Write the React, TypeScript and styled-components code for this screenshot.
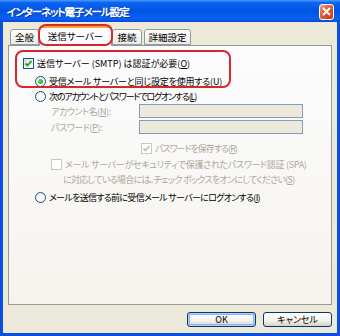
import styled, { createGlobalStyle } from "styled-components";

const GlobalStyle = createGlobalStyle`
  html, body {
    margin: 0;
    padding: 0;
    background: #ffffff;
  }
  body {
    font-family: "Noto Sans CJK JP", "Liberation Sans", sans-serif;
    font-feature-settings: "palt";
  }
`;

const Window = styled.div`
  position: relative;
  width: 340px;
  height: 336px;
  display: flex;
  flex-direction: column;
  background: #0a4fe0;
  overflow: hidden;
`;

const TitleBar = styled.div`
  height: 22px;
  flex: none;
  display: flex;
  align-items: center;
  justify-content: space-between;
  padding: 0 6px 0 7px;
  background: linear-gradient(
    to bottom,
    #4a9cff 0%,
    #0c63f2 12%,
    #0054e3 50%,
    #0860f2 85%,
    #0848d8 100%
  );
`;

const Title = styled.span`
  color: #ffffff;
  font-size: 10.5px;
  font-weight: 400;
  letter-spacing: -1px;
  -webkit-text-stroke: 0.45px #ffffff;
  text-shadow: 1px 1px 0 #0a2a8a;
`;

const CloseButton = styled.span`
  width: 15px;
  height: 16px;
  box-sizing: border-box;
  border: 1px solid #ffffff;
  border-radius: 3px;
  background: linear-gradient(135deg, #f0a08a 0%, #e2603c 40%, #c7380f 100%);
  display: flex;
  align-items: center;
  justify-content: center;
  margin-top: 1px;
`;

const Frame = styled.div`
  flex: 1;
  margin: 0 3px 3px;
  background: #ece9d8;
  display: flex;
  flex-direction: column;
`;

const TabStrip = styled.div`
  height: 23px;
  display: flex;
  align-items: flex-end;
  padding-left: 7px;
  position: relative;
  z-index: 1;
`;

const Tab = styled.div<{ $active?: boolean; $w: number; $gap?: number }>`
  box-sizing: border-box;
  width: ${({ $w }) => $w}px;
  margin-left: ${({ $gap }) => $gap ?? 0}px;
  height: ${({ $active }) => ($active ? 20 : 16)}px;
  margin-bottom: ${({ $active }) => ($active ? -1 : 0)}px;
  display: flex;
  align-items: center;
  justify-content: center;
  font-size: 9.5px;
  color: #000000;
  border: 1px solid #919b9c;
  border-bottom: ${({ $active }) => ($active ? "none" : "1px solid #919b9c")};
  border-top: ${({ $active }) =>
    $active ? "2px solid #f5a831" : "1px solid #919b9c"};
  border-radius: 3px 3px 0 0;
  background: ${({ $active }) =>
    $active ? "#fcfcfe" : "linear-gradient(to bottom, #ffffff, #ecebe5)"};
  padding-bottom: ${({ $active }) => ($active ? 2 : 0)}px;
`;

const Panel = styled.div`
  box-sizing: border-box;
  height: 260px;
  margin: 0 5px 0 5px;
  border: 1px solid #919b9c;
  background: linear-gradient(to bottom, #fcfcfe 0%, #f7f6f2 70%, #f4f3ee 100%);
  padding-top: 10px;
  display: flex;
  flex-direction: column;
`;

const Row = styled.div<{ $indent: number; $top?: number; $ls?: number }>`
  display: flex;
  align-items: center;
  height: 15px;
  padding-left: ${({ $indent }) => $indent}px;
  margin-top: ${({ $top }) => $top ?? 0}px;
  font-size: 9px;
  letter-spacing: ${({ $ls }) => $ls ?? 0}px;
  white-space: nowrap;
`;

const Label = styled.span<{ $disabled?: boolean }>`
  color: ${({ $disabled }) => ($disabled ? "#aca899" : "#000000")};
  margin-left: 3px;
`;

const FieldRow = styled.div<{ $top?: number }>`
  display: flex;
  align-items: center;
  height: 14px;
  padding-left: 42px;
  margin-top: ${({ $top }) => $top ?? 0}px;
  font-size: 9px;
  letter-spacing: -0.4px;
`;

const FieldLabel = styled.span`
  width: 88px;
  color: #aca899;
`;

const Field = styled.div`
  box-sizing: border-box;
  width: 164px;
  height: 14px;
  border: 1px solid #7f9db9;
  background: #ede9da;
`;

const SpaBlock = styled.div`
  display: flex;
  align-items: flex-start;
  padding-left: 42px;
  margin-top: 1px;
  font-size: 9px;
  line-height: 15px;
  color: #aca899;
  white-space: nowrap;
  letter-spacing: -0.3px;
`;

const SpaBox = styled.div`
  height: 15px;
  display: flex;
  align-items: center;
`;

const SpaText = styled.div`
  margin-left: 3px;
`;

const SpaSecond = styled.span`
  margin-left: -2px;
  letter-spacing: -0.7px;
`;

const BoxMark = styled.span<{ $disabled?: boolean }>`
  box-sizing: border-box;
  flex: none;
  width: 11px;
  height: 11px;
  border: 1px solid ${({ $disabled }) => ($disabled ? "#cac8bb" : "#1c5180")};
  background: ${({ $disabled }) =>
    $disabled ? "#ffffff" : "linear-gradient(135deg, #dcdcd7, #ffffff)"};
  display: flex;
  align-items: center;
  justify-content: center;
`;

const RadioMark = styled.span<{ $on?: boolean }>`
  box-sizing: border-box;
  flex: none;
  width: 11px;
  height: 11px;
  border-radius: 50%;
  border: 1px solid #1c5180;
  background: radial-gradient(circle at 60% 60%, #ffffff 30%, #e2e2dc 100%);
  display: flex;
  align-items: center;
  justify-content: center;
  &::after {
    content: "";
    display: ${({ $on }) => ($on ? "block" : "none")};
    width: 5px;
    height: 5px;
    border-radius: 50%;
    background: radial-gradient(circle at 35% 35%, #5cd65c, #21a121);
  }
`;

const ButtonRow = styled.div`
  display: flex;
  justify-content: flex-end;
  gap: 7px;
  margin-top: 7px;
  padding-right: 5px;
`;

const Button = styled.div<{ $default?: boolean }>`
  box-sizing: border-box;
  width: 69px;
  height: 15px;
  border: 1px solid #003c74;
  border-radius: 3px;
  background: linear-gradient(to bottom, #ffffff 0%, #f3f2ee 60%, #d6d0c5 100%);
  box-shadow: ${({ $default }) =>
    $default ? "inset 0 0 0 1px #b6cef5, inset 0 0 0 2px #8fb1ea" : "none"};
  display: flex;
  align-items: center;
  justify-content: center;
  font-size: 9px;
  color: #000000;
`;

const Mark = styled.div<{ $x: number; $y: number; $w: number; $h: number }>`
  position: absolute;
  left: ${({ $x }) => $x}px;
  top: ${({ $y }) => $y}px;
  width: ${({ $w }) => $w}px;
  height: ${({ $h }) => $h}px;
  box-sizing: border-box;
  border: 2px solid #d7262c;
  border-radius: 8px;
  z-index: 5;
  pointer-events: none;
`;

const Check = ({ color }: { color: string }) => (
  <svg width="9" height="9" viewBox="0 0 9 9">
    <path
      d="M1.5 4.5 L3.5 6.5 L7.5 2"
      fill="none"
      stroke={color}
      strokeWidth="1.8"
    />
  </svg>
);

const CloseIcon = () => (
  <svg width="9" height="9" viewBox="0 0 9 9">
    <path d="M1 1 L8 8 M8 1 L1 8" stroke="#ffffff" strokeWidth="1.8" />
  </svg>
);

export default function App() {
  return (
    <>
      <GlobalStyle />
      <Window>
        <TitleBar>
          <Title>インターネット電子メール設定</Title>
          <CloseButton>
            <CloseIcon />
          </CloseButton>
        </TitleBar>
        <Frame>
          <TabStrip>
            <Tab $w={29} $gap={0}>全般</Tab>
            <Tab $w={73} $active>送信サーバー</Tab>
            <Tab $w={30}>接続</Tab>
            <Tab $w={47} $gap={2}>詳細設定</Tab>
          </TabStrip>
          <Panel>
            <Row $indent={14}>
              <BoxMark>
                <Check color="#21a121" />
              </BoxMark>
              <Label>
                送信サーバー (SMTP) は認証が必要(<u>O</u>)
              </Label>
            </Row>
            <Row $indent={26} $top={3} $ls={-0.2}>
              <RadioMark $on />
              <Label>
                受信メール サーバーと同じ設定を使用する(<u>U</u>)
              </Label>
            </Row>
            <Row $indent={26} $ls={-1.2}>
              <RadioMark />
              <Label>
                次のアカウントとパスワードでログオンする(<u>L</u>)
              </Label>
            </Row>
            <FieldRow>
              <FieldLabel>
                アカウント名(<u>N</u>):
              </FieldLabel>
              <Field />
            </FieldRow>
            <FieldRow $top={2}>
              <FieldLabel>
                パスワード(<u>P</u>):
              </FieldLabel>
              <Field />
            </FieldRow>
            <Row $indent={132} $top={7} $ls={-1}>
              <BoxMark $disabled>
                <Check color="#c4c2b6" />
              </BoxMark>
              <Label $disabled>
                パスワードを保存する(<u>R</u>)
              </Label>
            </Row>
            <SpaBlock>
              <SpaBox>
                <BoxMark $disabled />
              </SpaBox>
              <SpaText>
                メール サーバーがセキュリティで保護されたパスワード認証 (SPA)
                <br />
                <SpaSecond>
                  に対応している場合には、チェック ボックスをオンにしてください(
                  <u>S</u>)
                </SpaSecond>
              </SpaText>
            </SpaBlock>
            <Row $indent={26} $top={3} $ls={-0.7}>
              <RadioMark />
              <Label>
                メールを送信する前に受信メール サーバーにログオンする(<u>I</u>)
              </Label>
            </Row>
          </Panel>
          <ButtonRow>
            <Button $default>OK</Button>
            <Button>キャンセル</Button>
          </ButtonRow>
        </Frame>
        <Mark $x={38} $y={24} $w={75} $h={22} />
        <Mark $x={15} $y={50} $w={216} $h={38} />
      </Window>
    </>
  );
}
